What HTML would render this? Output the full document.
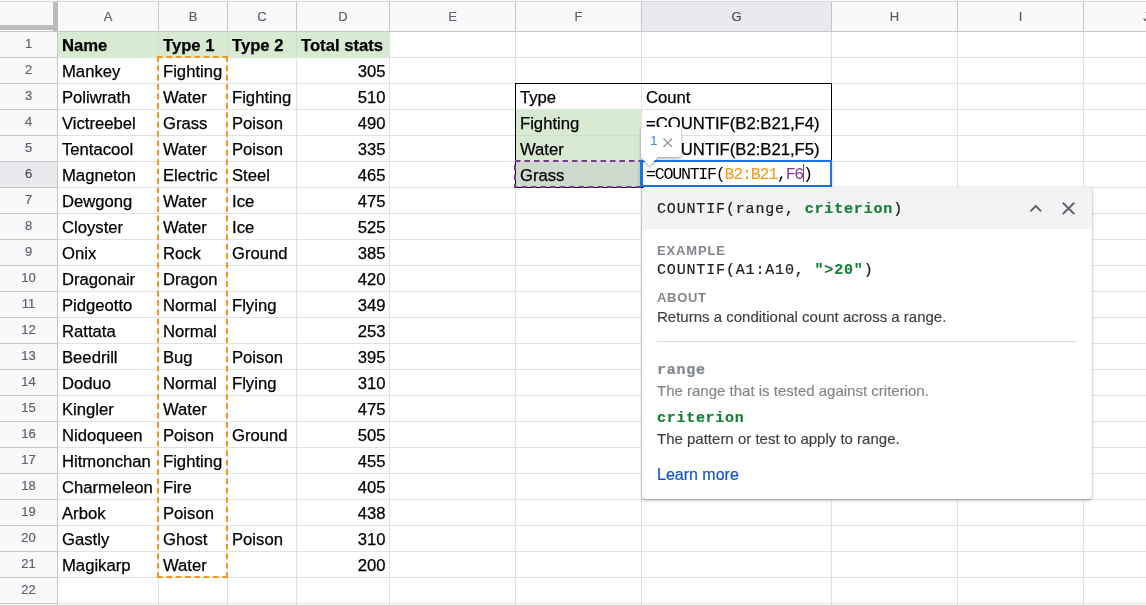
<!DOCTYPE html>
<html><head><meta charset="utf-8"><title>Sheet</title>
<style>
html,body{margin:0;padding:0;}
body{width:1146px;height:605px;overflow:hidden;background:#fff;position:relative;font-family:"Liberation Sans",Arial,sans-serif;color:#000;}
.abs,.c,.rh,.ch,.hl,.vl{position:absolute;}
.c{-webkit-text-stroke:0.25px #000;font-size:16.67px;line-height:27px;height:25px;white-space:nowrap;padding:0 4px 0 4px;box-sizing:border-box;}
.b{font-weight:bold;}
.r{text-align:right;padding-right:3.4px !important;}
.rh{left:0;width:57px;height:25px;line-height:23px;-webkit-text-stroke:0.2px;text-align:center;font-size:13px;color:#5f6368;}
.ch{top:2px;height:29px;line-height:30px;text-align:center;font-size:13px;color:#5f6368;-webkit-text-stroke:0.2px;}
.hl{left:0;width:1146px;height:1px;background:#e1e1e1;}
.vl{top:0;height:605px;width:1px;background:#e1e1e1;}
.mono{font-family:"Liberation Mono","DejaVu Sans Mono",monospace;}
</style></head><body><div id="root" style="position:absolute;left:0;top:0;width:1146px;height:605px;will-change:transform">

<div class="abs" style="left:0;top:0;width:1146px;height:31px;background:#f8f9fa"></div>
<div class="abs" style="left:0;top:0;width:57px;height:605px;background:#f8f9fa"></div>
<div class="abs" style="left:641px;top:2px;width:190px;height:29px;background:#e8eaed"></div>
<div class="abs" style="left:0;top:162px;width:57px;height:25px;background:#e8eaed"></div>
<div class="hl" style="top:57px;left:58px"></div>
<div class="hl" style="top:57px;width:57px;background:#c4c7c5"></div>
<div class="hl" style="top:83px;left:58px"></div>
<div class="hl" style="top:83px;width:57px;background:#c4c7c5"></div>
<div class="hl" style="top:109px;left:58px"></div>
<div class="hl" style="top:109px;width:57px;background:#c4c7c5"></div>
<div class="hl" style="top:135px;left:58px"></div>
<div class="hl" style="top:135px;width:57px;background:#c4c7c5"></div>
<div class="hl" style="top:161px;left:58px"></div>
<div class="hl" style="top:161px;width:57px;background:#c4c7c5"></div>
<div class="hl" style="top:187px;left:58px"></div>
<div class="hl" style="top:187px;width:57px;background:#c4c7c5"></div>
<div class="hl" style="top:213px;left:58px"></div>
<div class="hl" style="top:213px;width:57px;background:#c4c7c5"></div>
<div class="hl" style="top:239px;left:58px"></div>
<div class="hl" style="top:239px;width:57px;background:#c4c7c5"></div>
<div class="hl" style="top:265px;left:58px"></div>
<div class="hl" style="top:265px;width:57px;background:#c4c7c5"></div>
<div class="hl" style="top:291px;left:58px"></div>
<div class="hl" style="top:291px;width:57px;background:#c4c7c5"></div>
<div class="hl" style="top:317px;left:58px"></div>
<div class="hl" style="top:317px;width:57px;background:#c4c7c5"></div>
<div class="hl" style="top:343px;left:58px"></div>
<div class="hl" style="top:343px;width:57px;background:#c4c7c5"></div>
<div class="hl" style="top:369px;left:58px"></div>
<div class="hl" style="top:369px;width:57px;background:#c4c7c5"></div>
<div class="hl" style="top:395px;left:58px"></div>
<div class="hl" style="top:395px;width:57px;background:#c4c7c5"></div>
<div class="hl" style="top:421px;left:58px"></div>
<div class="hl" style="top:421px;width:57px;background:#c4c7c5"></div>
<div class="hl" style="top:447px;left:58px"></div>
<div class="hl" style="top:447px;width:57px;background:#c4c7c5"></div>
<div class="hl" style="top:473px;left:58px"></div>
<div class="hl" style="top:473px;width:57px;background:#c4c7c5"></div>
<div class="hl" style="top:499px;left:58px"></div>
<div class="hl" style="top:499px;width:57px;background:#c4c7c5"></div>
<div class="hl" style="top:525px;left:58px"></div>
<div class="hl" style="top:525px;width:57px;background:#c4c7c5"></div>
<div class="hl" style="top:551px;left:58px"></div>
<div class="hl" style="top:551px;width:57px;background:#c4c7c5"></div>
<div class="hl" style="top:577px;left:58px"></div>
<div class="hl" style="top:577px;width:57px;background:#c4c7c5"></div>
<div class="hl" style="top:603px;left:58px"></div>
<div class="hl" style="top:603px;width:57px;background:#c4c7c5"></div>
<div class="hl" style="top:629px;left:58px"></div>
<div class="hl" style="top:629px;width:57px;background:#c4c7c5"></div>
<div class="vl" style="left:158px;top:32px"></div>
<div class="vl" style="left:158px;top:2px;height:29px;background:#c4c7c5"></div>
<div class="vl" style="left:227px;top:32px"></div>
<div class="vl" style="left:227px;top:2px;height:29px;background:#c4c7c5"></div>
<div class="vl" style="left:296px;top:32px"></div>
<div class="vl" style="left:296px;top:2px;height:29px;background:#c4c7c5"></div>
<div class="vl" style="left:389px;top:32px"></div>
<div class="vl" style="left:389px;top:2px;height:29px;background:#c4c7c5"></div>
<div class="vl" style="left:515px;top:32px"></div>
<div class="vl" style="left:515px;top:2px;height:29px;background:#c4c7c5"></div>
<div class="vl" style="left:641px;top:32px"></div>
<div class="vl" style="left:641px;top:2px;height:29px;background:#c4c7c5"></div>
<div class="vl" style="left:831px;top:32px"></div>
<div class="vl" style="left:831px;top:2px;height:29px;background:#c4c7c5"></div>
<div class="vl" style="left:957px;top:32px"></div>
<div class="vl" style="left:957px;top:2px;height:29px;background:#c4c7c5"></div>
<div class="vl" style="left:1083px;top:32px"></div>
<div class="vl" style="left:1083px;top:2px;height:29px;background:#c4c7c5"></div>
<div class="vl" style="left:1209px;top:32px"></div>
<div class="vl" style="left:1209px;top:2px;height:29px;background:#c4c7c5"></div>
<div class="abs" style="left:58px;top:32px;width:332px;height:26px;background:#d9ead3"></div>
<div class="abs" style="left:516px;top:109px;width:126px;height:52px;background:#d9ead3"></div>
<div class="abs" style="left:516px;top:161px;width:126px;height:26px;background:#cfdacf"></div>
<div class="abs" style="left:158px;top:32px;width:1px;height:25px;background:#cddfc7"></div>
<div class="abs" style="left:227px;top:32px;width:1px;height:25px;background:#cddfc7"></div>
<div class="abs" style="left:296px;top:32px;width:1px;height:25px;background:#cddfc7"></div>
<div class="abs" style="left:516px;top:135px;width:125px;height:1px;background:#cddfc7"></div>
<div class="abs" style="left:0;top:1px;width:1146px;height:1px;background:#d5d7d9"></div>
<div class="abs" style="left:0;top:31px;width:1146px;height:1px;background:#c4c7c5"></div>
<div class="abs" style="left:57px;top:0;width:1px;height:605px;background:#c4c7c5"></div>
<div class="abs" style="left:53px;top:2px;width:5px;height:29px;background:#bcbcbc"></div>
<div class="abs" style="left:0;top:25px;width:57px;height:5px;background:#bcbcbc"></div>
<div class="ch" style="left:58px;width:100px;color:#5f6368">A</div>
<div class="ch" style="left:159px;width:68px;color:#5f6368">B</div>
<div class="ch" style="left:228px;width:68px;color:#5f6368">C</div>
<div class="ch" style="left:297px;width:92px;color:#5f6368">D</div>
<div class="ch" style="left:390px;width:125px;color:#5f6368">E</div>
<div class="ch" style="left:516px;width:125px;color:#5f6368">F</div>
<div class="ch" style="left:642px;width:189px;color:#4a4d51">G</div>
<div class="ch" style="left:832px;width:125px;color:#5f6368">H</div>
<div class="ch" style="left:958px;width:125px;color:#5f6368">I</div>
<div class="ch" style="left:1084px;width:125px;color:#5f6368">J</div>
<div class="rh" style="top:32px;color:#5f6368">1</div>
<div class="rh" style="top:58px;color:#5f6368">2</div>
<div class="rh" style="top:84px;color:#5f6368">3</div>
<div class="rh" style="top:110px;color:#5f6368">4</div>
<div class="rh" style="top:136px;color:#5f6368">5</div>
<div class="rh" style="top:162px;color:#4a4d51">6</div>
<div class="rh" style="top:188px;color:#5f6368">7</div>
<div class="rh" style="top:214px;color:#5f6368">8</div>
<div class="rh" style="top:240px;color:#5f6368">9</div>
<div class="rh" style="top:266px;color:#5f6368">10</div>
<div class="rh" style="top:292px;color:#5f6368">11</div>
<div class="rh" style="top:318px;color:#5f6368">12</div>
<div class="rh" style="top:344px;color:#5f6368">13</div>
<div class="rh" style="top:370px;color:#5f6368">14</div>
<div class="rh" style="top:396px;color:#5f6368">15</div>
<div class="rh" style="top:422px;color:#5f6368">16</div>
<div class="rh" style="top:448px;color:#5f6368">17</div>
<div class="rh" style="top:474px;color:#5f6368">18</div>
<div class="rh" style="top:500px;color:#5f6368">19</div>
<div class="rh" style="top:526px;color:#5f6368">20</div>
<div class="rh" style="top:552px;color:#5f6368">21</div>
<div class="rh" style="top:578px;color:#5f6368">22</div>
<div class="c b" style="left:58px;top:32px;width:100px">Name</div>
<div class="c b" style="left:159px;top:32px;width:68px">Type 1</div>
<div class="c b" style="left:228px;top:32px;width:68px">Type 2</div>
<div class="c b" style="left:297px;top:32px;width:92px">Total stats</div>
<div class="c" style="left:58px;top:58px;width:100px">Mankey</div>
<div class="c" style="left:159px;top:58px;width:68px">Fighting</div>
<div class="c r" style="left:297px;top:58px;width:92px">305</div>
<div class="c" style="left:58px;top:84px;width:100px">Poliwrath</div>
<div class="c" style="left:159px;top:84px;width:68px">Water</div>
<div class="c" style="left:228px;top:84px;width:68px">Fighting</div>
<div class="c r" style="left:297px;top:84px;width:92px">510</div>
<div class="c" style="left:58px;top:110px;width:100px">Victreebel</div>
<div class="c" style="left:159px;top:110px;width:68px">Grass</div>
<div class="c" style="left:228px;top:110px;width:68px">Poison</div>
<div class="c r" style="left:297px;top:110px;width:92px">490</div>
<div class="c" style="left:58px;top:136px;width:100px">Tentacool</div>
<div class="c" style="left:159px;top:136px;width:68px">Water</div>
<div class="c" style="left:228px;top:136px;width:68px">Poison</div>
<div class="c r" style="left:297px;top:136px;width:92px">335</div>
<div class="c" style="left:58px;top:162px;width:100px">Magneton</div>
<div class="c" style="left:159px;top:162px;width:68px">Electric</div>
<div class="c" style="left:228px;top:162px;width:68px">Steel</div>
<div class="c r" style="left:297px;top:162px;width:92px">465</div>
<div class="c" style="left:58px;top:188px;width:100px">Dewgong</div>
<div class="c" style="left:159px;top:188px;width:68px">Water</div>
<div class="c" style="left:228px;top:188px;width:68px">Ice</div>
<div class="c r" style="left:297px;top:188px;width:92px">475</div>
<div class="c" style="left:58px;top:214px;width:100px">Cloyster</div>
<div class="c" style="left:159px;top:214px;width:68px">Water</div>
<div class="c" style="left:228px;top:214px;width:68px">Ice</div>
<div class="c r" style="left:297px;top:214px;width:92px">525</div>
<div class="c" style="left:58px;top:240px;width:100px">Onix</div>
<div class="c" style="left:159px;top:240px;width:68px">Rock</div>
<div class="c" style="left:228px;top:240px;width:68px">Ground</div>
<div class="c r" style="left:297px;top:240px;width:92px">385</div>
<div class="c" style="left:58px;top:266px;width:100px">Dragonair</div>
<div class="c" style="left:159px;top:266px;width:68px">Dragon</div>
<div class="c r" style="left:297px;top:266px;width:92px">420</div>
<div class="c" style="left:58px;top:292px;width:100px">Pidgeotto</div>
<div class="c" style="left:159px;top:292px;width:68px">Normal</div>
<div class="c" style="left:228px;top:292px;width:68px">Flying</div>
<div class="c r" style="left:297px;top:292px;width:92px">349</div>
<div class="c" style="left:58px;top:318px;width:100px">Rattata</div>
<div class="c" style="left:159px;top:318px;width:68px">Normal</div>
<div class="c r" style="left:297px;top:318px;width:92px">253</div>
<div class="c" style="left:58px;top:344px;width:100px">Beedrill</div>
<div class="c" style="left:159px;top:344px;width:68px">Bug</div>
<div class="c" style="left:228px;top:344px;width:68px">Poison</div>
<div class="c r" style="left:297px;top:344px;width:92px">395</div>
<div class="c" style="left:58px;top:370px;width:100px">Doduo</div>
<div class="c" style="left:159px;top:370px;width:68px">Normal</div>
<div class="c" style="left:228px;top:370px;width:68px">Flying</div>
<div class="c r" style="left:297px;top:370px;width:92px">310</div>
<div class="c" style="left:58px;top:396px;width:100px">Kingler</div>
<div class="c" style="left:159px;top:396px;width:68px">Water</div>
<div class="c r" style="left:297px;top:396px;width:92px">475</div>
<div class="c" style="left:58px;top:422px;width:100px">Nidoqueen</div>
<div class="c" style="left:159px;top:422px;width:68px">Poison</div>
<div class="c" style="left:228px;top:422px;width:68px">Ground</div>
<div class="c r" style="left:297px;top:422px;width:92px">505</div>
<div class="c" style="left:58px;top:448px;width:100px">Hitmonchan</div>
<div class="c" style="left:159px;top:448px;width:68px">Fighting</div>
<div class="c r" style="left:297px;top:448px;width:92px">455</div>
<div class="c" style="left:58px;top:474px;width:100px">Charmeleon</div>
<div class="c" style="left:159px;top:474px;width:68px">Fire</div>
<div class="c r" style="left:297px;top:474px;width:92px">405</div>
<div class="c" style="left:58px;top:500px;width:100px">Arbok</div>
<div class="c" style="left:159px;top:500px;width:68px">Poison</div>
<div class="c r" style="left:297px;top:500px;width:92px">438</div>
<div class="c" style="left:58px;top:526px;width:100px">Gastly</div>
<div class="c" style="left:159px;top:526px;width:68px">Ghost</div>
<div class="c" style="left:228px;top:526px;width:68px">Poison</div>
<div class="c r" style="left:297px;top:526px;width:92px">310</div>
<div class="c" style="left:58px;top:552px;width:100px">Magikarp</div>
<div class="c" style="left:159px;top:552px;width:68px">Water</div>
<div class="c r" style="left:297px;top:552px;width:92px">200</div>
<div class="c" style="left:516px;top:84px;width:125px">Type</div>
<div class="c" style="left:642px;top:84px;width:189px">Count</div>
<div class="c" style="left:516px;top:110px;width:125px">Fighting</div>
<div class="c" style="left:642px;top:110px;width:189px">=COUNTIF(B2:B21,F4)</div>
<div class="c" style="left:516px;top:136px;width:125px">Water</div>
<div class="c" style="left:642px;top:136px;width:189px">=COUNTIF(B2:B21,F5)</div>
<div class="c" style="left:516px;top:162px;width:125px">Grass</div>
<div class="abs" style="left:515px;top:83px;width:315px;height:103px;border:1px solid #000"></div>
<svg class="abs" style="left:150px;top:50px" width="90" height="540" fill="none" stroke="#f7981d" stroke-width="2"><path d="M7 7H78M7 527H78" stroke-dasharray="5.7 3.63"/><path d="M8 6V528M77 6V528" stroke-dasharray="5.7 3.687"/></svg>
<svg class="abs" style="left:505px;top:150px" width="150" height="50"><rect x="10" y="11" width="126" height="26" fill="none" stroke="#7e3794" stroke-width="2" stroke-dasharray="5.5 4"/></svg>
<div class="abs" style="left:640px;top:160px;width:187px;height:23px;border:2px solid #1a73e8;border-left-width:3px;background:#fff;box-shadow:0 1px 4px rgba(0,0,0,.2)"></div>
<div class="abs mono" id="fx" style="left:646px;top:163px;height:24px;line-height:24px;font-size:16.67px;letter-spacing:-1.27px;white-space:nowrap;color:#000">=COUNTIF(<span style="color:#f7981d">B2:B21</span>,<span style="color:#7e3794">F6</span><span style="display:inline-block;width:1px;height:18px;background:#7e3794;vertical-align:-3px;margin:0 -0.5px 0 -0.5px"></span>)</div>
<svg class="abs" style="left:630px;top:117px;filter:drop-shadow(0 1px 1.5px rgba(0,0,0,.4))" width="64" height="60"><path d="M14 10 H48 a3 3 0 0 1 3 3 V37 a3 3 0 0 1 -3 3 H28 L19.400 49 L11 40.500 V13 a3 3 0 0 1 3 -3 Z" fill="#fff"/></svg>
<div class="abs" style="left:650px;top:131px;font-size:13.5px;line-height:20px;color:#4285f4">1</div>
<svg class="abs" style="left:660px;top:135px" width="16" height="16" fill="none" stroke="#9aa0a6" stroke-width="1.5"><path d="M3.500 3.500 L12 12 M12 3.500 L3.500 12"/></svg>
<div class="abs" style="left:642px;top:187px;width:450px;height:312px;background:#fff;border-radius:4px;box-shadow:0 1px 2px 0 rgba(60,64,67,.3),0 1px 3px 1px rgba(60,64,67,.15)">
<div class="abs" style="left:0;top:0;width:450px;height:42px;background:#f1f3f4;border-radius:4px 4px 0 0"></div>
<div class="abs mono" style="left:15px;top:12px;font-size:15px;letter-spacing:.84px;line-height:22px;color:#202124;white-space:nowrap;-webkit-text-stroke:.2px">COUNTIF(range, <b style="color:#188038">criterion</b>)</div>
<svg class="abs" style="left:384px;top:12px" width="60" height="20" fill="none" stroke="#5f6368" stroke-width="1.9"><path d="M4.500 12.300 L9.800 6.800 L15.100 12.300"/><path d="M36.800 3.700 L48.300 15 M48.300 3.700 L36.800 15"/></svg>
<div class="abs b" style="left:15px;top:56px;font-size:13px;line-height:16px;letter-spacing:.85px;color:#80868b">EXAMPLE</div>
<div class="abs mono" style="left:15px;top:73px;font-size:15px;letter-spacing:.84px;line-height:22px;color:#202124;white-space:nowrap;-webkit-text-stroke:.2px">COUNTIF(A1:A10, <b style="color:#188038">&quot;&gt;20&quot;</b>)</div>
<div class="abs b" style="left:15px;top:103px;font-size:13px;line-height:16px;letter-spacing:.7px;color:#80868b">ABOUT</div>
<div class="abs" style="left:15px;top:119px;font-size:15px;line-height:22px;color:#3c4043;white-space:nowrap;-webkit-text-stroke:.15px">Returns a conditional count across a range.</div>
<div class="abs" style="left:15px;top:154px;width:420px;height:1px;background:#dadce0"></div>
<div class="abs mono b" style="left:15px;top:173px;font-size:15px;letter-spacing:.72px;line-height:22px;color:#80868b;-webkit-text-stroke:.2px">range</div>
<div class="abs" style="left:15px;top:193px;font-size:15px;line-height:22px;color:#80868b;white-space:nowrap;-webkit-text-stroke:.15px">The range that is tested against criterion.</div>
<div class="abs mono b" style="left:15px;top:221px;font-size:15px;letter-spacing:.72px;line-height:22px;color:#188038;-webkit-text-stroke:.2px">criterion</div>
<div class="abs" style="left:15px;top:241px;font-size:15px;line-height:22px;color:#3c4043;white-space:nowrap;-webkit-text-stroke:.15px">The pattern or test to apply to range.</div>
<div class="abs" style="left:15px;top:277px;font-size:16px;line-height:22px;color:#1155cc;white-space:nowrap;-webkit-text-stroke:.2px">Learn more</div>
</div>
</div></body></html>
